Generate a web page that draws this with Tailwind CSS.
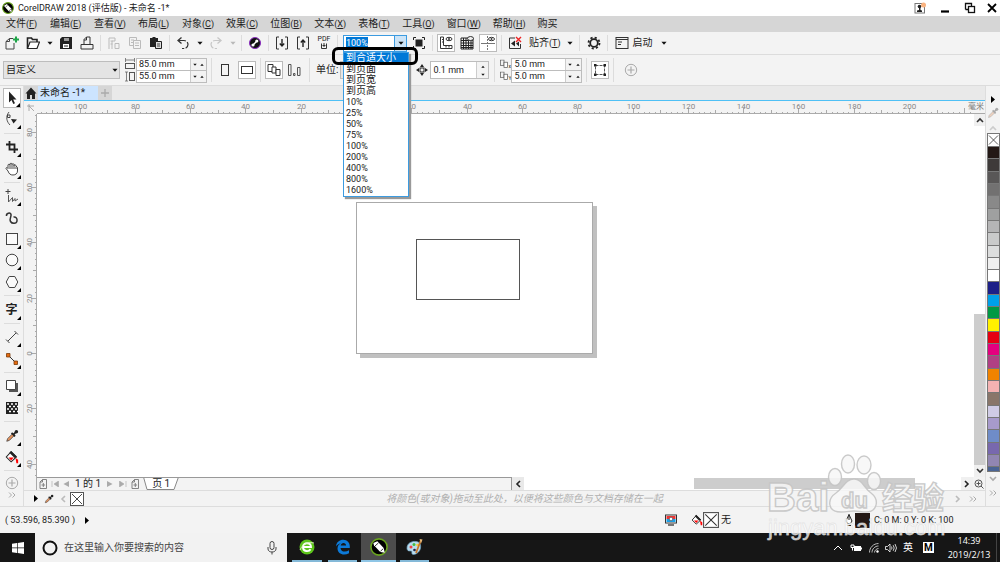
<!DOCTYPE html>
<html lang="zh-CN">
<head>
    <meta charset="UTF-8">
    <meta name="viewport" content="width=device-width, initial-scale=1.0">
    <title>CorelDRAW 2018 (评估版) - 未命名 -1*</title>
    <script src="https://cdn.jsdelivr.net/npm/@tailwindcss/browser@4"></script>
</head>
<body class="h-screen overflow-hidden flex flex-col bg-[#f3f3f3] text-[#222] text-[10px] leading-none font-[Roboto,'Noto_Sans_CJK_SC',sans-serif]">

    <!-- 图标 -->
    <svg class="hidden">
        <symbol id="caret" viewBox="0 0 7 4"><path d="M0.500 0.500h6L3.500 4z" fill="#111"/></symbol>
        <symbol id="caret-up" viewBox="0 0 7 4"><path d="M0.500 4h6L3.500 0.500z" fill="#111"/></symbol>
        <symbol id="play" viewBox="0 0 4 7"><path d="M0 0l4 3.500L0 7z" fill="#000"/></symbol>
        <symbol id="corner" viewBox="0 0 4 4"><path d="M4 0v4H0z" fill="#000"/></symbol>
        <symbol id="down" viewBox="0 0 8 6"><path d="M1 1l3 3 3-3" fill="none" stroke="currentColor" stroke-width="1.600"/></symbol>
        <symbol id="up" viewBox="0 0 8 6"><path d="M1 5l3-3 3 3" fill="none" stroke="currentColor" stroke-width="1.600"/></symbol>
        <symbol id="left" viewBox="0 0 6 8"><path d="M5 1L2 4l3 3" fill="none" stroke="currentColor" stroke-width="1.600"/></symbol>
        <symbol id="right" viewBox="0 0 6 8"><path d="M1 1l3 3-3 3" fill="none" stroke="currentColor" stroke-width="1.600"/></symbol>
        <symbol id="more" viewBox="0 0 8 6"><path d="M1 0.500L3.500 3 1 5.500M4.500 0.500L7 3 4.500 5.500" fill="none" stroke="#aaa" stroke-width="1"/></symbol>
        <symbol id="none" viewBox="0 0 14 14"><rect x="0.500" y="0.500" width="13" height="13" fill="#fff" stroke="#555"/><path d="M2 2l10 10M12 2L2 12" stroke="#333" stroke-width="0.900"/></symbol>
        <symbol id="dropper" viewBox="0 0 16 16"><path d="M2 14l1-3 6-6 2 2-6 6z" fill="#e8935c" stroke="#444" stroke-width="0.900"/><path d="M7.500 4.500l4 4M9.500 6.500l3.500-3.500" stroke="#222" stroke-width="2"/><circle cx="13" cy="3" r="2" fill="#222"/></symbol>
        <symbol id="bucket" viewBox="0 0 16 16"><path d="M7 2l6 6-6 5.500L1.500 8z" fill="#fff" stroke="#222" stroke-width="1.200"/><path d="M7 1l6.500 6.500L11 9 5 3z" fill="#222"/><path d="M4 8.500h6L7 12z" fill="#f00"/><path d="M12 9l3 2v4h-2z" fill="#f00"/></symbol>
        <symbol id="add" viewBox="0 0 14 14"><circle cx="7" cy="7" r="5.700" fill="none" stroke="#aaa"/><path d="M7 3.500v7M3.500 7h7" stroke="#aaa" stroke-width="1.200"/></symbol>
        <symbol id="leaf" viewBox="0 0 8 10"><path d="M1 9.500V3l2.500-2.500H7.500v9zM3.500 0.500V3H1M4.300 4v4M2.500 6h3.600" fill="none" stroke="#777" stroke-width="0.900"/></symbol>
        <symbol id="corel" viewBox="0 0 16 16"><circle cx="8" cy="8" r="7.200" fill="#000" stroke="#6aa51e" stroke-width="1.400"/><path d="M3 4.500L6.500 2.800l5.700 6 0.900 4.200-4-0.600-5.600-5.900z" fill="#fff"/><path d="M4.500 7l3-2.600M9.300 11.800l2.500-2.300" stroke="#000" stroke-width="0.700"/></symbol>
        <symbol id="offset" viewBox="0 0 12 12"><rect x="0.500" y="0.500" width="4" height="6" fill="none" stroke="#555" stroke-width="0.800"/><rect x="4.500" y="3" width="4" height="6" fill="#fff" stroke="#555" stroke-width="0.800"/></symbol>
    </svg>

    <!-- 标题栏 -->
    <header class="h-4 shrink-0 bg-white flex items-center pl-0.5 pr-0.5">
        <svg class="size-3 mr-1"><use href="#corel"/></svg>
        <h1 class="text-[9px]">CorelDRAW 2018 (评估版) - 未命名 -1*</h1>
        <div class="ml-auto flex items-center gap-3.5">
            <button aria-label="登录"><svg class="size-3" viewBox="0 0 12 12"><rect x="1" y="1.500" width="9.500" height="9.500" fill="#fff" stroke="#777"/><circle cx="5.500" cy="4.500" r="1.800" fill="#222"/><path d="M5 6h1.500v2L8 8.500V10H3V8.500L5 8z" fill="#222"/><circle cx="9.500" cy="3" r="2.500" fill="#f9b27f"/></svg></button>
            <button aria-label="最小化"><svg class="w-2.5 h-3" viewBox="0 0 10 12"><path d="M1 9.500h8" stroke="#000" stroke-width="2.200"/></svg></button>
            <button aria-label="还原"><svg class="w-3 h-3" viewBox="0 0 12 12"><path d="M1.500 7.500v-6h6v3M1.500 7.500h3" fill="none" stroke="#111" stroke-width="1.300"/><rect x="4.500" y="4.500" width="6" height="6" fill="#fff" stroke="#111" stroke-width="1.300"/></svg></button>
            <button aria-label="关闭" class="-ml-1"><svg class="w-3 h-3" viewBox="0 0 12 12"><path d="M2 2l8 8M10 2L2 10" stroke="#000" stroke-width="1.800"/></svg></button>
        </div>
    </header>

    <!-- 菜单栏 -->
    <nav class="h-4 shrink-0 bg-[#d6d6d6] flex items-center gap-3 pl-1.5 whitespace-nowrap">
        <a href="#" class="min-w-8">文件<span class="text-[9px]">(<u>F</u>)</span></a>
        <a href="#" class="min-w-8">编辑<span class="text-[9px]">(<u>E</u>)</span></a>
        <a href="#" class="min-w-8">查看<span class="text-[9px]">(<u>V</u>)</span></a>
        <a href="#" class="min-w-8">布局<span class="text-[9px]">(<u>L</u>)</span></a>
        <a href="#" class="min-w-8">对象<span class="text-[9px]">(<u>C</u>)</span></a>
        <a href="#" class="min-w-8">效果<span class="text-[9px]">(<u>C</u>)</span></a>
        <a href="#" class="min-w-8">位图<span class="text-[9px]">(<u>B</u>)</span></a>
        <a href="#" class="min-w-8">文本<span class="text-[9px]">(<u>X</u>)</span></a>
        <a href="#" class="min-w-8">表格<span class="text-[9px]">(<u>T</u>)</span></a>
        <a href="#" class="min-w-8">工具<span class="text-[9px]">(<u>O</u>)</span></a>
        <a href="#" class="min-w-8">窗口<span class="text-[9px]">(<u>W</u>)</span></a>
        <a href="#" class="min-w-8">帮助<span class="text-[9px]">(<u>H</u>)</span></a>
        <a href="#">购买</a>
    </nav>

    <!-- 标准工具栏 -->
    <div class="h-[23px] shrink-0 border-b border-[#dcdcdc] flex items-center pl-0.5">
        <div class="flex gap-px">
            <button aria-label="新建" class="w-5 grid place-items-center"><svg class="size-3.5" viewBox="0 0 14 14"><path d="M8 2.500H4.500L1 5.500V13h8V7M4.500 2.500v3H1" fill="none" stroke="#444"/><path d="M11 0.500v6M8 3.500h6" stroke="#1ea548" stroke-width="2"/></svg></button>
            <button aria-label="打开" class="w-5 grid place-items-center"><svg class="size-3.5" viewBox="0 0 14 14"><path d="M1.500 12.500V2h4l1 1.500h4.500V6" fill="none" stroke="#222" stroke-width="1.600"/><path d="M1.500 12.500L4 6h9.500l-2.500 6.500z" fill="#fff" stroke="#222" stroke-width="1.200"/></svg></button>
            <button aria-label="打开选项" class="w-[11px] grid place-items-center"><svg class="w-1.5 h-1"><use href="#caret"/></svg></button>
            <button aria-label="保存" class="w-5 grid place-items-center"><svg class="size-3.5" viewBox="0 0 14 14"><path d="M3 1h10v12H1V3z" fill="#222"/><path d="M5 2h5v3H5z" fill="#999"/><path d="M4 8h6v4H4z" fill="#fff"/><path d="M5 10h4" stroke="#222"/></svg></button>
            <button aria-label="打印" class="w-5 grid place-items-center"><svg class="size-3.5" viewBox="0 0 14 14"><path d="M4 8.500V3.500L6.500 1H10v7.500M1 13V8.500h12V13zM6.500 1v3H4" fill="none" stroke="#333"/></svg></button>
        </div>
        <div class="w-px h-4 mx-[3px] bg-[#dcdcdc]"></div>
        <div class="flex gap-px">
            <button aria-label="剪切" class="w-5 grid place-items-center"><svg class="size-3.5" viewBox="0 0 14 14"><path d="M2 13V2h6v3H5v8M3.500 5h2M3.500 8h2M8 7.500h4v5H8z" fill="none" stroke="#bbb"/></svg></button>
            <button aria-label="复制" class="w-5 grid place-items-center"><svg class="size-3.5" viewBox="0 0 14 14"><path d="M5 9.500H1.500V1.500h7V4M3 4h3M3 6.500h2M5.500 4.500h7v8h-7zM7 7h4M7 9.500h4" fill="none" stroke="#bbb"/></svg></button>
            <button aria-label="粘贴" class="w-5 grid place-items-center"><svg class="size-3.5" viewBox="0 0 14 14"><path d="M1 2h2l1-1h2l1 1h2v9H1z" fill="#222"/><path d="M6.500 5.500h6v7h-6z" fill="#ddd" stroke="#222"/><path d="M8 8h3M8 10h3" stroke="#444"/></svg></button>
        </div>
        <div class="w-px h-4 mx-[3px] bg-[#dcdcdc]"></div>
        <div class="flex gap-px">
            <button aria-label="撤销" class="w-5 grid place-items-center"><svg class="size-3.5" viewBox="0 0 14 14"><path d="M3 4.500h5a4 4 0 0 1 0 8H6" fill="none" stroke="#333" stroke-width="1.200" stroke-dasharray="7 1.500"/><path d="M5.500 1.500l-3.500 3 3.500 3" fill="none" stroke="#333" stroke-width="1.300"/></svg></button>
            <button aria-label="撤销选项" class="w-[11px] grid place-items-center"><svg class="w-1.5 h-1"><use href="#caret"/></svg></button>
            <button aria-label="重做" class="w-5 grid place-items-center"><svg class="size-3.5" viewBox="0 0 14 14"><path d="M11 4.500H6a4 4 0 0 0 0 8h2" fill="none" stroke="#c6c6c6" stroke-width="1.200" stroke-dasharray="7 1.500"/><path d="M8.500 1.500l3.500 3-3.500 3" fill="none" stroke="#c6c6c6" stroke-width="1.300"/></svg></button>
            <button aria-label="重做选项" class="w-[11px] grid place-items-center opacity-25"><svg class="w-1.5 h-1"><use href="#caret"/></svg></button>
        </div>
        <div class="w-px h-4 mx-[3px] bg-[#dcdcdc]"></div>
        <button aria-label="搜索内容" class="w-5 grid place-items-center"><svg class="size-3" viewBox="0 0 12 12"><circle cx="6" cy="6" r="5.500" fill="#111" stroke="#8a2bc0"/><path d="M4 8l4-4" stroke="#fff" stroke-width="1.300"/><circle cx="7.800" cy="4" r="1.600" fill="#fff"/><circle cx="4" cy="8" r="1.600" fill="#fff"/></svg></button>
        <div class="w-px h-4 mx-[3px] bg-[#dcdcdc]"></div>
        <div class="flex gap-px">
            <button aria-label="导入" class="w-5 grid place-items-center"><svg class="size-3.5" viewBox="0 0 14 14"><path d="M4 1H1.500v12H4M10 1h2.500v12H10" fill="none" stroke="#333"/><path d="M7 3v7M4.800 7.500L7 10l2.200-2.500" fill="none" stroke="#222" stroke-width="1.400"/></svg></button>
            <button aria-label="导出" class="w-5 grid place-items-center"><svg class="size-3.5" viewBox="0 0 14 14"><path d="M4 1H1.500v12H4M10 1h2.500v12H10" fill="none" stroke="#333"/><path d="M7 11V4M4.800 6.500L7 4l2.200 2.500" fill="none" stroke="#222" stroke-width="1.400"/></svg></button>
            <button aria-label="发布为 PDF" class="w-5 flex flex-col items-center text-[7px]"><span>PDF</span><svg class="size-1.5" viewBox="0 0 6 6"><path d="M0.500 0.500v5h5v-5M3 0v4M1.500 2.500h3" fill="none" stroke="#333"/></svg></button>
        </div>
        <div class="w-px h-4 mx-[3px] bg-[#dcdcdc]"></div>
        <div class="relative ml-0.5 w-16">
            <div class="h-[17px] flex border border-[#3c9be0] bg-white">
                <div class="flex-1 flex items-center pl-0.5"><input aria-label="缩放级别" value="100%" class="w-[22px] h-3 bg-[#0078d7] text-white text-[9px] outline-none"></div>
                <button aria-label="展开缩放级别" class="w-3 bg-[#cce4f7] border-l border-[#3c9be0] grid place-items-center"><svg class="w-1.5 h-1"><use href="#caret"/></svg></button>
            </div>
            <ul id="zoom-list" class="absolute z-10 left-0 top-[17px] w-[66px] bg-white border border-[#3c9be0] text-[9px] shadow-[2px_2px_1px_#999]"></ul>
            <div class="absolute z-20 -left-[11px] top-3 w-[86px] h-[18px] border-[3px] border-black rounded-md"></div>
        </div>
        <button aria-label="全屏预览" class="w-5 ml-0.5 grid place-items-center"><svg class="size-3" viewBox="0 0 12 12"><path d="M2.500 2.500h7v7h-7z" fill="#222"/><path d="M0.500 3V0.500H3M9 0.500h2.500V3M11.500 9v2.500H9M3 11.500H0.500V9" fill="none" stroke="#222"/></svg></button>
        <div class="w-px h-4 mx-[3px] bg-[#dcdcdc]"></div>
        <div class="flex gap-px">
            <button aria-label="显示标尺" class="w-5 h-[18px] grid place-items-center"><svg class="size-[18px]" viewBox="0 0 18 18"><rect x="0.500" y="0.500" width="17" height="17" fill="#fff" stroke="#bbb"/><path d="M3.500 3h3v8.500H15v3H3.500z" fill="none" stroke="#333"/><path d="M5 5.500h1.500M5 8h1.500M9 12v1.500M12 12v1.500" stroke="#333"/><ellipse cx="12" cy="5" rx="3" ry="1.700" fill="none" stroke="#333"/><circle cx="12" cy="5" r="1" fill="#333"/></svg></button>
            <button aria-label="显示网格" class="w-5 h-[18px] grid place-items-center"><svg class="size-3.5" viewBox="0 0 14 14"><path d="M1 2h12v11H1zM3.500 2v11M6 2v11M8.500 2v11M11 2v11M1 4.500h12M1 7h12M1 9.500h12M1 11.500h12" fill="none" stroke="#222"/><ellipse cx="10.500" cy="2.500" rx="3" ry="2" fill="#eee" stroke="#333"/></svg></button>
            <button aria-label="显示辅助线" class="w-5 h-[18px] grid place-items-center"><svg class="size-[18px]" viewBox="0 0 18 18"><rect x="0.500" y="0.500" width="17" height="17" fill="#fff" stroke="#bbb"/><path d="M8.500 2v14" stroke="#777" stroke-dasharray="2 1"/><path d="M2 9.500h14" stroke="#777"/><ellipse cx="12.500" cy="5" rx="3" ry="1.700" fill="none" stroke="#333"/><circle cx="12.500" cy="5" r="1" fill="#333"/></svg></button>
        </div>
        <div class="w-px h-4 mx-[3px] bg-[#dcdcdc]"></div>
        <button aria-label="贴齐关闭" class="w-5 grid place-items-center"><svg class="size-3.5" viewBox="0 0 14 14"><path d="M7 2H1.500v10.500h11V8" fill="none" stroke="#333"/><path d="M3 7.500l4-3v6zM8 7.500l3-2v5z" fill="#222"/><path d="M8 1l5 5M13 1L8 6" stroke="#e22" stroke-width="1.400"/></svg></button>
        <button class="flex items-center ml-1"><span>贴齐<span class="text-[9px]">(<u>T</u>)</span></span><svg class="w-1.5 h-1 ml-1.5"><use href="#caret"/></svg></button>
        <div class="w-px h-4 ml-1.5 mr-1 bg-[#dcdcdc]"></div>
        <button aria-label="选项" class="w-5 grid place-items-center"><svg class="size-3.5" viewBox="0 0 14 14"><circle cx="7" cy="7" r="3.800" fill="none" stroke="#222" stroke-width="1.800"/><circle cx="7" cy="7" r="5.500" fill="none" stroke="#222" stroke-width="1.800" stroke-dasharray="2.160 2.160"/></svg></button>
        <div class="w-px h-4 mx-[3px] bg-[#dcdcdc]"></div>
        <button class="flex items-center ml-1"><svg class="size-3.5 mr-1" viewBox="0 0 14 14"><rect x="1" y="1.500" width="12" height="11" fill="none" stroke="#333"/><path d="M1 3.500h12M3 6h4M3 8.500h3" stroke="#333"/></svg>启动<svg class="w-1.5 h-1 ml-2"><use href="#caret"/></svg></button>
    </div>

    <!-- 属性栏 -->
    <div class="h-[31px] shrink-0 border-b border-[#dcdcdc] flex items-center pl-[3px]">
        <div class="relative w-[117px]">
            <select aria-label="页面大小" class="appearance-none w-full h-[18px] border border-[#bdbdbd] bg-[#e4e4e4] px-0.5"><option>自定义</option></select>
            <svg class="absolute right-0.5 top-[7px] w-1.5 h-1"><use href="#caret"/></svg>
        </div>
        <svg class="w-2.5 h-6 ml-[5px] mr-px" viewBox="0 0 10 24"><path d="M0.500 2h9M0.500 0v4M9.500 0v4" stroke="#666" stroke-width="0.800"/><rect x="0.500" y="5.500" width="9" height="5" fill="none" stroke="#555"/><path d="M1.500 14v9M0 14h3M0 23h3" stroke="#666" stroke-width="0.800"/><rect x="4.500" y="14.500" width="5" height="8" fill="none" stroke="#555"/></svg>
        <div class="border border-[#bdbdbd] w-[71px]">
            <div class="flex h-[11px] box-content border-b border-[#bdbdbd]"><input aria-label="页面宽度" value="85.0 mm" class="w-[53px] pl-0.5 bg-white text-[9px]"><button aria-label="减小宽度" class="flex-1 grid place-items-center border-l border-[#ccc]"><svg class="w-1 h-[3px]"><use href="#caret"/></svg></button><button aria-label="增大宽度" class="flex-1 grid place-items-center"><svg class="w-1 h-[3px]"><use href="#caret-up"/></svg></button></div>
            <div class="flex h-[11px]"><input aria-label="页面高度" value="55.0 mm" class="w-[53px] pl-0.5 bg-white text-[9px]"><button aria-label="减小高度" class="flex-1 grid place-items-center border-l border-[#ccc]"><svg class="w-1 h-[3px]"><use href="#caret"/></svg></button><button aria-label="增大高度" class="flex-1 grid place-items-center"><svg class="w-1 h-[3px]"><use href="#caret-up"/></svg></button></div>
        </div>
        <div class="w-px h-6 mx-1 bg-[#dcdcdc]"></div>
        <button aria-label="纵向" class="size-[18px] grid place-items-center"><svg class="w-2.5 h-3" viewBox="0 0 10 12"><rect x="1.500" y="0.500" width="7" height="11" fill="none" stroke="#333"/></svg></button>
        <button aria-label="横向" class="size-[18px] ml-1 border border-[#bbb] bg-white grid place-items-center"><svg class="w-3 h-2" viewBox="0 0 12 8"><rect x="0.500" y="0.500" width="11" height="7" fill="none" stroke="#333"/></svg></button>
        <div class="w-px h-6 mx-1 bg-[#dcdcdc]"></div>
        <button aria-label="所有页面" class="size-[18px] border border-[#bbb] bg-white grid place-items-center"><svg class="size-3.5" viewBox="0 0 14 14"><path d="M1 1.500h5v7H1z" fill="#fff" stroke="#333"/><path d="M5 4h4v6H5z" fill="#fff" stroke="#333"/><path d="M9 6.500h4v6H9z" fill="#fff" stroke="#333"/></svg></button>
        <button aria-label="当前页" class="size-[18px] ml-0.5 grid place-items-center"><svg class="size-3.5" viewBox="0 0 14 14"><path d="M1.500 1.500h2.500v11H1.500zM6.500 10.500h1.500v2h-1.500zM10.500 4.500h2.500V12.500h-2.500z" fill="none" stroke="#555"/></svg></button>
        <div class="w-px h-6 mx-1.5 bg-[#dcdcdc]"></div>
        <label for="unit">单位:</label>
        <div class="relative w-[70px] ml-0.5">
            <select id="unit" class="appearance-none w-full h-[18px] border border-[#bdbdbd] bg-[#e4e4e4] px-0.5"><option>毫米</option></select>
        </div>
        <svg class="size-3 ml-1.5 mr-0.5" viewBox="0 0 12 12"><path d="M6 0l2 3H4zM6 12l2-3H4zM0 6l3-2v4zM12 6L9 4v4z" fill="#222"/><rect x="4" y="4" width="4" height="4" fill="none" stroke="#222"/></svg>
        <div class="h-[18px] w-[59px] border border-[#bdbdbd] flex">
            <input aria-label="微调距离" value="0.1 mm" class="w-[45px] pl-0.5 bg-white text-[9px]">
            <div class="flex-1 flex flex-col border-l border-[#ccc]"><button aria-label="增大微调" class="flex-1 grid place-items-center"><svg class="w-1 h-[3px]"><use href="#caret-up"/></svg></button><button aria-label="减小微调" class="flex-1 grid place-items-center"><svg class="w-1 h-[3px]"><use href="#caret"/></svg></button></div>
        </div>
        <div class="w-px h-6 mx-[5px] bg-[#dcdcdc]"></div>
        <div class="flex flex-col text-[5px]">
            <span class="flex items-end"><svg class="w-2 h-2.5" viewBox="0 0 9 10"><use href="#offset" width="12" height="12"/></svg>x</span>
            <span class="flex items-end mt-0.5"><svg class="w-2 h-2.5" viewBox="0 0 9 10"><use href="#offset" width="12" height="12"/></svg>Y</span>
        </div>
        <div class="border border-[#bdbdbd] w-[71px]">
            <div class="flex h-[11px] box-content border-b border-[#bdbdbd]"><input aria-label="再制距离 X" value="5.0 mm" class="w-[53px] pl-0.5 bg-white text-[9px]"><button aria-label="减小 X" class="flex-1 grid place-items-center border-l border-[#ccc]"><svg class="w-1 h-[3px]"><use href="#caret"/></svg></button><button aria-label="增大 X" class="flex-1 grid place-items-center"><svg class="w-1 h-[3px]"><use href="#caret-up"/></svg></button></div>
            <div class="flex h-[11px]"><input aria-label="再制距离 Y" value="5.0 mm" class="w-[53px] pl-0.5 bg-white text-[9px]"><button aria-label="减小 Y" class="flex-1 grid place-items-center border-l border-[#ccc]"><svg class="w-1 h-[3px]"><use href="#caret"/></svg></button><button aria-label="增大 Y" class="flex-1 grid place-items-center"><svg class="w-1 h-[3px]"><use href="#caret-up"/></svg></button></div>
        </div>
        <div class="w-px h-6 mx-1 bg-[#dcdcdc]"></div>
        <button aria-label="视为已填充" class="size-[18px] border border-[#bbb] bg-white grid place-items-center"><svg class="size-3.5" viewBox="0 0 14 14"><rect x="2.500" y="2.500" width="9" height="9" fill="none" stroke="#555" stroke-dasharray="3 1"/><path d="M1 1h2.500v2.500H1zM10.500 1h2.500v2.500h-2.500zM1 10.500h2.500v2.500H1zM10.500 10.500h2.500v2.500h-2.500z" fill="#222"/></svg></button>
        <div class="w-px h-6 mx-1 bg-[#dcdcdc]"></div>
        <button aria-label="自定义工具栏" class="ml-1.5"><svg class="size-3.5"><use href="#add"/></svg></button>
    </div>

    <main class="flex-1 min-h-0 flex">
        <!-- 工具箱 -->
        <aside class="w-6 shrink-0 border-r border-[#ddd] flex flex-col justify-between items-center pt-0.5 pb-1">
            <button aria-label="选择" class="relative w-[18px] h-5 border border-[#bbb] bg-white grid place-items-center"><svg class="size-3.5" viewBox="0 0 14 14"><path d="M4 0.500v11l2.500-2.500 1.800 4 1.700-0.800-1.800-3.700h3.300z" fill="#222"/></svg><svg class="absolute right-0 bottom-0 size-1"><use href="#corner"/></svg></button>
            <button aria-label="形状" class="relative w-[18px] h-5 grid place-items-center"><svg class="size-4" viewBox="0 0 16 16"><path d="M5 1C1 6 3 11 6 14" fill="none" stroke="#555"/><path d="M3.500 4h2.500v2.500h-2.500z" fill="#f3f3f3" stroke="#444"/><path d="M7 8l6 0.500-3.500 4z" fill="#222"/></svg><svg class="absolute right-0 bottom-0 size-1"><use href="#corner"/></svg></button>
            <hr class="w-4 my-0.5 border-[#ddd]">
            <button aria-label="裁剪" class="relative w-[18px] h-5 grid place-items-center"><svg class="size-3.5" viewBox="0 0 14 14"><path d="M4.500 1v8.500H13M1 4.500h8.500V13" fill="none" stroke="#222" stroke-width="1.800"/></svg><svg class="absolute right-0 bottom-0 size-1"><use href="#corner"/></svg></button>
            <button aria-label="平移" class="relative w-[18px] h-5 grid place-items-center"><svg class="size-3.5" viewBox="0 0 14 14"><path d="M3 9L1 6.500c0-1.200 1.300-1.200 2 0V3c0-1 2-1 2 0V2c0-1 2-1 2 0v0.500c0-1 2-1 2 0V3.500c0-1 2-1 2 0.500l1.500 1.500V9c0 2.500-2 4-4.500 4S4 12 3 9zM5 3v4M7 2.500V7M9 3v4M11 4.500V7" fill="#fff" stroke="#333" stroke-width="0.900"/></svg><svg class="absolute right-0 bottom-0 size-1"><use href="#corner"/></svg></button>
            <hr class="w-4 my-0.5 border-[#ddd]">
            <button aria-label="手绘" class="relative w-[18px] h-5 grid place-items-center"><svg class="size-4" viewBox="0 0 16 16"><path d="M4 1v5M1.500 3.500h5" stroke="#444"/><path d="M4.500 7v7l4-4.500v4l2.500-3v2.500l3-2" fill="none" stroke="#555"/></svg><svg class="absolute right-0 bottom-0 size-1"><use href="#corner"/></svg></button>
            <button aria-label="艺术笔" class="w-[18px] h-5 grid place-items-center"><svg class="size-3.5" viewBox="0 0 14 14"><path d="M1.500 5c-0.500-3 4-4 4.500-1.500S4 8 5.500 10.500s6 2.500 6.500-0.500S10.500 5.500 8.500 6" fill="none" stroke="#333" stroke-width="1.500"/></svg></button>
            <button aria-label="矩形" class="relative w-[18px] h-5 grid place-items-center"><svg class="size-3.5" viewBox="0 0 14 14"><rect x="1.500" y="1.500" width="11" height="11" fill="#fafafa" stroke="#444"/></svg><svg class="absolute right-0 bottom-0 size-1"><use href="#corner"/></svg></button>
            <button aria-label="椭圆形" class="relative w-[18px] h-5 grid place-items-center"><svg class="size-3.5" viewBox="0 0 14 14"><circle cx="7" cy="7" r="5.800" fill="#fafafa" stroke="#444"/></svg><svg class="absolute right-0 bottom-0 size-1"><use href="#corner"/></svg></button>
            <button aria-label="多边形" class="relative w-[18px] h-5 grid place-items-center"><svg class="size-3.5" viewBox="0 0 14 14"><path d="M4.200 1.500h5.600L12.800 7l-3 5.500H4.200L1.200 7z" fill="#fafafa" stroke="#444"/></svg><svg class="absolute right-0 bottom-0 size-1"><use href="#corner"/></svg></button>
            <hr class="w-4 my-0.5 border-[#ddd]">
            <button class="relative w-[18px] h-5 text-[12px] font-bold">字<svg class="absolute right-0 bottom-0 size-1"><use href="#corner"/></svg></button>
            <hr class="w-4 my-0.5 border-[#ddd]">
            <button aria-label="平行度量" class="relative w-[18px] h-5 grid place-items-center"><svg class="size-3.5" viewBox="0 0 14 14"><path d="M3 11L11 3M1 9.500l3.500 3.500M9.500 1L13 4.500" stroke="#444"/></svg><svg class="absolute right-0 bottom-0 size-1"><use href="#corner"/></svg></button>
            <button aria-label="连接器" class="relative w-[18px] h-5 grid place-items-center"><svg class="size-3.5" viewBox="0 0 14 14"><path d="M3 3l8 8" stroke="#333"/><path d="M1.500 1.500H5V5H1.500zM9 9h3.500v3.500H9z" fill="#e46a10" stroke="#7a3a08" stroke-width="0.800"/></svg><svg class="absolute right-0 bottom-0 size-1"><use href="#corner"/></svg></button>
            <hr class="w-4 my-0.5 border-[#ddd]">
            <button aria-label="阴影" class="relative w-[18px] h-5 grid place-items-center"><svg class="size-3.5" viewBox="0 0 14 14"><path d="M4 4h9v9H4z" fill="#555"/><path d="M1.500 1.500h9v9h-9z" fill="#fff" stroke="#444"/></svg><svg class="absolute right-0 bottom-0 size-1"><use href="#corner"/></svg></button>
            <button aria-label="透明度" class="w-[18px] h-5 grid place-items-center"><svg class="size-3.5" viewBox="0 0 14 14"><rect x="1" y="1" width="12" height="12" fill="#222"/><path d="M2 3h10M4 5.500h10M2 8h10M4 10.500h10" stroke="#fff" stroke-width="1.600" stroke-dasharray="2 2"/></svg></button>
            <hr class="w-4 my-0.5 border-[#ddd]">
            <button aria-label="颜色滴管" class="relative w-[18px] h-5 grid place-items-center"><svg class="size-3.5"><use href="#dropper"/></svg><svg class="absolute right-0 bottom-0 size-1"><use href="#corner"/></svg></button>
            <button aria-label="交互式填充" class="relative w-[18px] h-5 grid place-items-center"><svg class="size-3.5"><use href="#bucket"/></svg><svg class="absolute right-0 bottom-0 size-1"><use href="#corner"/></svg></button>
            <hr class="w-4 my-0.5 border-[#ddd]">
            <button aria-label="快速自定义" class="h-4"><svg class="size-3.5"><use href="#add"/></svg></button>
            <button aria-label="更多工具" class="pb-1"><svg class="w-2 h-1.5"><use href="#more"/></svg></button>
        </aside>

        <!-- 文档窗口 -->
        <section class="flex-1 min-w-0 flex flex-col">
            <div class="h-[15px] shrink-0 bg-[#e9e9e9] border-b border-[#4fc0f5] flex items-stretch">
                <a href="#" aria-label="欢迎屏幕" class="w-3.5 bg-[#d6d6d6] grid place-items-center"><svg class="size-3" viewBox="0 0 12 12"><path d="M6 0.500L0.500 6.500H2V12h3V8h2v4h3V6.500h1.500z" fill="#222"/></svg></a>
                <a href="#" class="w-[60px] pl-0.5 bg-[#cce4ff] flex items-center whitespace-nowrap">未命名 -1*</a>
                <button aria-label="新建文档" class="w-3.5 bg-[#d6d6d6] text-[#999] grid place-items-center"><svg class="size-2" viewBox="0 0 8 8"><path d="M4 0v8M0 4h8" stroke="#aaa" stroke-width="1.300"/></svg></button>
            </div>
            <div class="h-[13px] shrink-0 flex">
                <div class="w-[13px] grid place-items-center"><svg class="size-2" viewBox="0 0 8 8"><path d="M0 2h7M2 0v7M2 2l5 5" stroke="#999" stroke-width="0.800"/></svg></div>
                <svg id="ruler-h" class="flex-1 min-w-0 h-[13px] border-b border-[#aaa] text-[8px]"></svg>
            </div>
            <div class="flex-1 min-h-0 flex">
                <svg id="ruler-v" class="w-[13px] shrink-0 h-full border-r border-[#aaa] text-[8px]"></svg>
                <div class="relative flex-1 bg-white overflow-hidden">
                    <div class="absolute left-[319px] top-[88px] w-[237px] h-[152px] bg-white border border-[#aaa] shadow-[4px_4px_0_#c0c0c0]">
                        <div class="absolute left-[59px] top-[36px] w-[104px] h-[61px] border border-[#555]"></div>
                    </div>
                </div>
                <div class="w-[11px] bg-white flex flex-col">
                    <button aria-label="向上滚动" class="h-3 bg-[#f0f0f0] grid place-items-center text-[#333]"><svg class="w-2 h-1.5"><use href="#up"/></svg></button>
                    <div class="flex-1"></div>
                    <div class="h-[151px] bg-[#cdcdcd]"></div>
                    <button aria-label="向下滚动" class="h-3 bg-[#f0f0f0] grid place-items-center text-[#333]"><svg class="w-2 h-1.5"><use href="#down"/></svg></button>
                </div>
            </div>
            <!-- 页面导航 -->
            <div class="h-[13px] shrink-0 flex">
                <div class="w-[13px] border-r border-[#aaa]"></div>
                <div class="w-[475px] flex items-center border-t border-r border-[#999] pl-0.5">
                    <button aria-label="在前面添加页"><svg class="w-2 h-2.5"><use href="#leaf"/></svg></button>
                    <button aria-label="第一页" class="ml-1"><svg class="w-2 h-1.5" viewBox="0 0 8 6"><path d="M1 0v6M7.500 0v6L3 3z" fill="#aaa" stroke="#aaa" stroke-width="0.600"/></svg></button>
                    <button aria-label="前一页" class="ml-1"><svg class="w-1.5 h-1.5" viewBox="0 0 6 6"><path d="M6 0v6L0.500 3z" fill="#aaa"/></svg></button>
                    <span class="mx-1.5">1 的 1</span>
                    <button aria-label="后一页"><svg class="w-1.5 h-1.5" viewBox="0 0 6 6"><path d="M0 0v6l5.500-3z" fill="#aaa"/></svg></button>
                    <button aria-label="最后一页" class="ml-1.5"><svg class="w-2 h-1.5" viewBox="0 0 8 6"><path d="M7 0v6M0.500 0v6L5 3z" fill="#aaa" stroke="#aaa" stroke-width="0.600"/></svg></button>
                    <button aria-label="在后面添加页" class="ml-1"><svg class="w-2 h-2.5"><use href="#leaf"/></svg></button>
                    <a href="#" class="relative ml-1 w-9 h-3 grid place-items-center"><svg class="absolute inset-0 w-9 h-3" viewBox="0 0 36 12"><path d="M0.500 -1L4 11.500h27L35.500 -1" fill="#fff" stroke="#888"/></svg><span class="relative">页 1</span></a>
                </div>
                <button aria-label="向左滚动" class="w-3 grid place-items-center bg-[#e9e9e9] text-[#222]"><svg class="w-1.5 h-2"><use href="#left"/></svg></button>
                <div class="flex-1 flex bg-white pt-px pb-px"><div class="w-[170px]"></div><div class="w-[221px] bg-[#cdcdcd]"></div></div>
                <button aria-label="向右滚动" class="w-3 grid place-items-center bg-[#f0f0f0] text-[#222]"><svg class="w-1.5 h-2"><use href="#right"/></svg></button>
                <button aria-label="导航器" class="w-3 grid place-items-center"><svg class="size-2.5" viewBox="0 0 10 10"><circle cx="4.500" cy="4.500" r="3.500" fill="none" stroke="#555"/><path d="M4.500 2.500v4M2.500 4.500h4M7 7l2.500 2.500" stroke="#555"/></svg></button>
            </div>
            <!-- 文档调色板 -->
            <div class="h-4 shrink-0 flex items-center border-t border-[#ddd] pl-2.5">
                <svg class="w-1 h-[7px]"><use href="#play"/></svg>
                <button aria-label="取色" class="ml-1.5"><svg class="size-2.5"><use href="#dropper"/></svg></button>
                <button aria-label="向左" class="ml-1.5 text-[#bbb]"><svg class="w-1.5 h-2"><use href="#left"/></svg></button>
                <button aria-label="无填充" class="ml-1"><svg class="size-3.5"><use href="#none"/></svg></button>
                <p class="flex-1 pl-2.5 text-center italic text-[#b0b0b0] whitespace-nowrap">将颜色(或对象)拖动至此处，以便将这些颜色与文档存储在一起</p>
                <button aria-label="向右" class="text-[#bbb]"><svg class="w-1.5 h-2"><use href="#right"/></svg></button>
                <button aria-label="更多" class="mx-2"><svg class="w-2 h-1.5"><use href="#more"/></svg></button>
            </div>
        </section>

        <!-- 调色板 -->
        <aside class="w-[15px] shrink-0 border-l border-[#ddd] flex flex-col items-center pt-2.5">
            <svg class="w-1 h-[7px]"><use href="#play"/></svg>
            <button aria-label="滴管" class="mt-1 opacity-35"><svg class="size-3"><use href="#dropper"/></svg></button>
            <button aria-label="向上" class="mt-1.5 mb-0.5 text-[#ccc]"><svg class="w-2 h-1.5"><use href="#up"/></svg></button>
            <div id="palette" class="flex-1 w-[13px] flex flex-col bg-[#777] gap-px border border-[#777]"></div>
            <button aria-label="向下" class="mt-1 text-[#aaa]"><svg class="w-2 h-1.5"><use href="#down"/></svg></button>
            <button aria-label="更多颜色" class="mt-2 mb-2.5"><svg class="w-2 h-1.5"><use href="#more"/></svg></button>
        </aside>
    </main>

    <!-- 状态栏 -->
    <footer class="h-[27px] shrink-0 border-t border-[#ddd] flex items-center pl-[5px] text-[9px]">
        <span>( 53.596, 85.390 )</span>
        <svg class="w-1 h-[7px] ml-2.5"><use href="#play"/></svg>
        <div class="ml-auto w-[335px] flex items-center">
            <svg class="size-3" viewBox="0 0 12 12"><rect x="0.500" y="1" width="11" height="8" fill="#fff" stroke="#333"/><path d="M1.500 2h9v3h-9z" fill="#e33"/><path d="M1.500 5h9v3h-9z" fill="#19a0e8"/><circle cx="6" cy="5" r="1.800" fill="#fff" stroke="#555" stroke-width="0.700"/><path d="M3 11h6" stroke="#333" stroke-width="1.300"/></svg>
            <svg class="size-3 ml-3.5"><use href="#bucket"/></svg>
            <svg class="size-4"><use href="#none"/></svg>
            <span class="ml-0.5 text-[10px]">无</span>
            <svg class="w-2 h-3 ml-[114px] mr-0.5" viewBox="0 0 8 12"><path d="M4 0.500L1 7l1.500 2.500h3L7 7zM4 0.500V6M2 11.500h4" fill="#fff" stroke="#222"/></svg>
            <span class="size-[15px] bg-[#231815]"></span>
            <span class="ml-1">C: 0 M: 0 Y: 0 K: 100</span>
        </div>
    </footer>

    <!-- 任务栏 -->
    <div class="h-[29px] shrink-0 bg-[#161616] flex items-stretch text-white">
        <button aria-label="开始" class="w-[35px] grid place-items-center"><svg class="size-3" viewBox="0 0 12 12"><path d="M0 1.800L5 1v4.600H0zM5.700 0.900L12 0v5.600H5.700zM0 6.300h5V11l-5-0.800zM5.700 6.300H12V12l-6.300-0.900z" fill="#fff"/></svg></button>
        <label class="w-[252px] bg-[#f2f2f2] flex items-center pl-[7px] pr-2.5">
            <svg class="size-4 mr-1.5 shrink-0" viewBox="0 0 16 16"><circle cx="8" cy="8" r="6.500" fill="none" stroke="#111" stroke-width="2"/></svg>
            <input aria-label="搜索" placeholder="在这里输入你要搜索的内容" class="flex-1 min-w-0 text-[10px] placeholder:text-[#444]">
            <svg class="w-2.5 h-3.5" viewBox="0 0 10 14"><rect x="3" y="0.500" width="4" height="8" rx="2" fill="none" stroke="#444"/><path d="M1 6v2c0 4 8 4 8 0V6M5 11v2.500" fill="none" stroke="#444"/></svg>
        </label>
        <div class="flex items-stretch pl-[5px]">
            <button aria-label="360浏览器" class="w-[30px] mr-1.5 grid place-items-center border-b-2 border-[#84b9d8]"><svg class="size-4" viewBox="0 0 16 16"><circle cx="8" cy="8" r="7.500" fill="#5cc41a"/><path d="M4 8h8c0-5-8-5-8 0s6 5 7.500 2.200" fill="none" stroke="#fff" stroke-width="1.900"/><path d="M1 11C4 4 10 3 15 4" fill="none" stroke="#e8f7c8" stroke-width="0.900"/></svg></button>
            <button aria-label="Edge" class="w-[29px] mr-1 grid place-items-center border-b-2 border-[#84b9d8]"><svg class="size-4" viewBox="0 0 16 16"><path d="M1 7.500C1.500 3 4.500 0.800 8.300 0.800c4 0 6.500 3 6.500 6.500V9H5.500c0.200 4 5 4.500 8.500 2.300v3C8.500 17 2.500 15 2.500 9.500c0-2.500 1.300-4.300 3.300-5.300C3.800 4.600 2 5.800 1 7.500zM5.700 6.500h5.400c0-3.500-5-3.500-5.400 0z" fill="#0d7ad8"/></svg></button>
            <button aria-label="CorelDRAW" class="w-[35px] mr-1 grid place-items-center bg-[#4c4c4c] border-b-2 border-[#8fc6e6]"><svg class="size-[18px]"><use href="#corel"/></svg></button>
            <button aria-label="画图" class="w-[29px] grid place-items-center border-b-2 border-[#84b9d8]"><svg class="size-[18px]" viewBox="0 0 18 18"><path d="M1 10C1 5 6 3 10 3.500s5 3 4.500 6.500-4 6.500-7 6.500S7 13 5 13s-4 0-4-3z" fill="#b9dcee" stroke="#6ba4c4" stroke-width="0.700"/><circle cx="5" cy="9" r="1.500" fill="#e44"/><circle cx="8" cy="6.500" r="1.500" fill="#4b4"/><circle cx="11.500" cy="7" r="1.300" fill="#fc3"/><circle cx="8.500" cy="12" r="1.300" fill="#224"/><path d="M15 2L10 15" stroke="#c9772a" stroke-width="1.800"/><path d="M13.500 1l3 0.500-1.500 4z" fill="#e5b878"/></svg></button>
        </div>
        <div class="ml-auto flex items-center">
            <button aria-label="显示隐藏的图标" class="mr-[7px]"><svg class="w-2.5 h-1.5" viewBox="0 0 10 6"><path d="M1 5l4-4 4 4" fill="none" stroke="#fff"/></svg></button>
            <svg class="w-3 h-2.5 mr-[7px]" viewBox="0 0 12 10"><path d="M1 2h3v2.500H1zM2.500 4.500v3" fill="none" stroke="#fff"/><rect x="4" y="3" width="7" height="5" fill="#fff"/><path d="M11.500 4.500v2" stroke="#fff"/></svg>
            <svg class="size-2.5 mr-1.5" viewBox="0 0 10 10"><path d="M0.500 9.500C0.500 4.500 4.500 0.500 9.500 0.500M3 9.500C3 6 6 3 9.500 3M5.500 9.500c0-2 2-4 4-4" fill="none" stroke="#ccc" stroke-width="0.900"/><circle cx="8.500" cy="8.500" r="1.200" fill="#fff"/></svg>
            <svg class="w-3 h-2.5 mr-1.5" viewBox="0 0 12 10"><path d="M0.500 3.500h2L5 1v8L2.500 6.500h-2zM6.500 3.500q1 1.500 0 3M8.200 2.200q2 2.800 0 5.600M10 1q3 4 0 8" fill="none" stroke="#fff" stroke-width="0.800"/></svg>
            <span class="mr-2.5">英</span>
            <span class="size-[11px] mr-3 bg-white text-black font-bold grid place-items-center">M</span>
            <div class="w-[46px] flex flex-col items-center gap-[5px] text-[9px] font-['Open_Sans',sans-serif]"><time>14:39</time><time>2019/2/13</time></div>
            <div class="w-px h-full ml-1 mr-[3px] bg-[#444]"></div>
        </div>
    </div>

    <!-- 水印 -->
    <svg class="absolute left-[764px] top-[450px] w-[190px] h-[92px] pointer-events-none font-['Liberation_Sans','Noto_Sans_CJK_SC',sans-serif] font-bold" viewBox="0 0 190 92">
        <g fill="#f7f7f7" fill-opacity="0.85" stroke="#c4c4c4" stroke-opacity="0.9" stroke-width="1.400">
            <text x="3" y="61" font-size="40">Bai</text>
            <ellipse cx="71" cy="27" rx="6.500" ry="8.500"/>
            <ellipse cx="84" cy="14" rx="6.500" ry="9"/>
            <ellipse cx="100" cy="15" rx="7" ry="9"/>
            <ellipse cx="110" cy="31" rx="6.500" ry="8.500"/>
            <path d="M90 29c8 0 10 9 17 14 9 7 6 19-5 19-5 0-8-1-12-1s-7 1-13 1C63 62 63 49 72 43c7-5 10-14 18-14z"/>
            <text x="118" y="59" font-size="31">经验</text>
            <text x="77" y="58" font-size="22" fill="#eee">du</text>
        </g>
        <text x="4" y="85" font-size="22" class="font-normal" fill="#fff" fill-opacity="0.75" stroke="#ddd" stroke-opacity="0.7" stroke-width="0.800">jingyan.baidu.com</text>
    </svg>

    <script>
        // 缩放级别列表
        const zoomLevels = ['到合适大小', '到页面', '到页宽', '到页高', '10%', '25%', '50%', '75%', '100%', '200%', '400%', '800%', '1600%'];
        const zoomList = document.getElementById('zoom-list');
        zoomLevels.forEach((level, index) => {
            const stateClass = index === 0 ? 'bg-[#0078d7] text-white' : '';
            const sizeClass = index < 4 ? 'text-[10px]' : '';
            zoomList.innerHTML += `<li class="h-[11px] pl-0.5 flex items-center whitespace-nowrap ${stateClass} ${sizeClass}">${level}</li>`;
        });

        // 调色板颜色
        const colors = ['#231815', '#3e3a39', '#595757', '#727171', '#898989', '#9fa0a0', '#b5b5b6', '#c9caca', '#dcdddd', '#efefef', '#ffffff',
            '#1d2088', '#00a0e9', '#009944', '#fff100', '#e60012', '#e4007f', '#b04084', '#f08300', '#f4b2b2', '#89766a', '#d0cce6',
            '#a79acc', '#6f8cc8', '#7868ae', '#9186b2'];
        const palette = document.getElementById('palette');
        palette.innerHTML = '<button aria-label="无" class="h-3 bg-white grid"><svg class="w-full h-full" viewBox="0 0 11 11"><path d="M1 1l9 9M10 1L1 10" stroke="#333" stroke-width="0.800"/></svg></button>';
        colors.forEach((color) => {
            palette.innerHTML += `<button aria-label="${color}" class="flex-1" style="background:${color}"></button>`;
        });
        palette.innerHTML += '<button aria-label="#4a6494" class="h-1 bg-[#4a6494]"></button>';

        // 标尺刻度：每 20 毫米一个标签
        const unit = 2.765;
        const hZero = 319;
        const vZero = 239;
        let hMarks = '';
        for (let mm = -114; mm <= 222; mm += 2) {
            const x = Math.round(hZero + mm * unit) + 0.5;
            const size = mm % 20 === 0 ? 5 : mm % 10 === 0 ? 3 : 1;
            hMarks += `<path d="M${x} ${12 - size}v${size}" stroke="#aaa"/>`;
            // 原点标签被缩放列表盖住，不画
            if (mm % 20 === 0 && mm !== 0 && mm < 220) {
                hMarks += `<text x="${x}" y="8" text-anchor="middle" fill="#888">${Math.abs(mm)}</text>`;
            }
        }
        hMarks += '<text x="931" y="8" fill="#777">毫米</text>';
        document.getElementById('ruler-h').innerHTML = hMarks;

        let vMarks = '';
        for (let mm = -44; mm <= 86; mm += 2) {
            const y = Math.round(vZero - mm * unit) + 0.5;
            const size = mm % 20 === 0 ? 5 : mm % 10 === 0 ? 3 : 1;
            vMarks += `<path d="M${12 - size} ${y}h${size}" stroke="#aaa"/>`;
            if (mm % 20 === 0) {
                vMarks += `<text transform="translate(8 ${y}) rotate(-90)" text-anchor="middle" fill="#888">${Math.abs(mm)}</text>`;
            }
        }
        document.getElementById('ruler-v').innerHTML = vMarks;
    </script>
</body>
</html>
